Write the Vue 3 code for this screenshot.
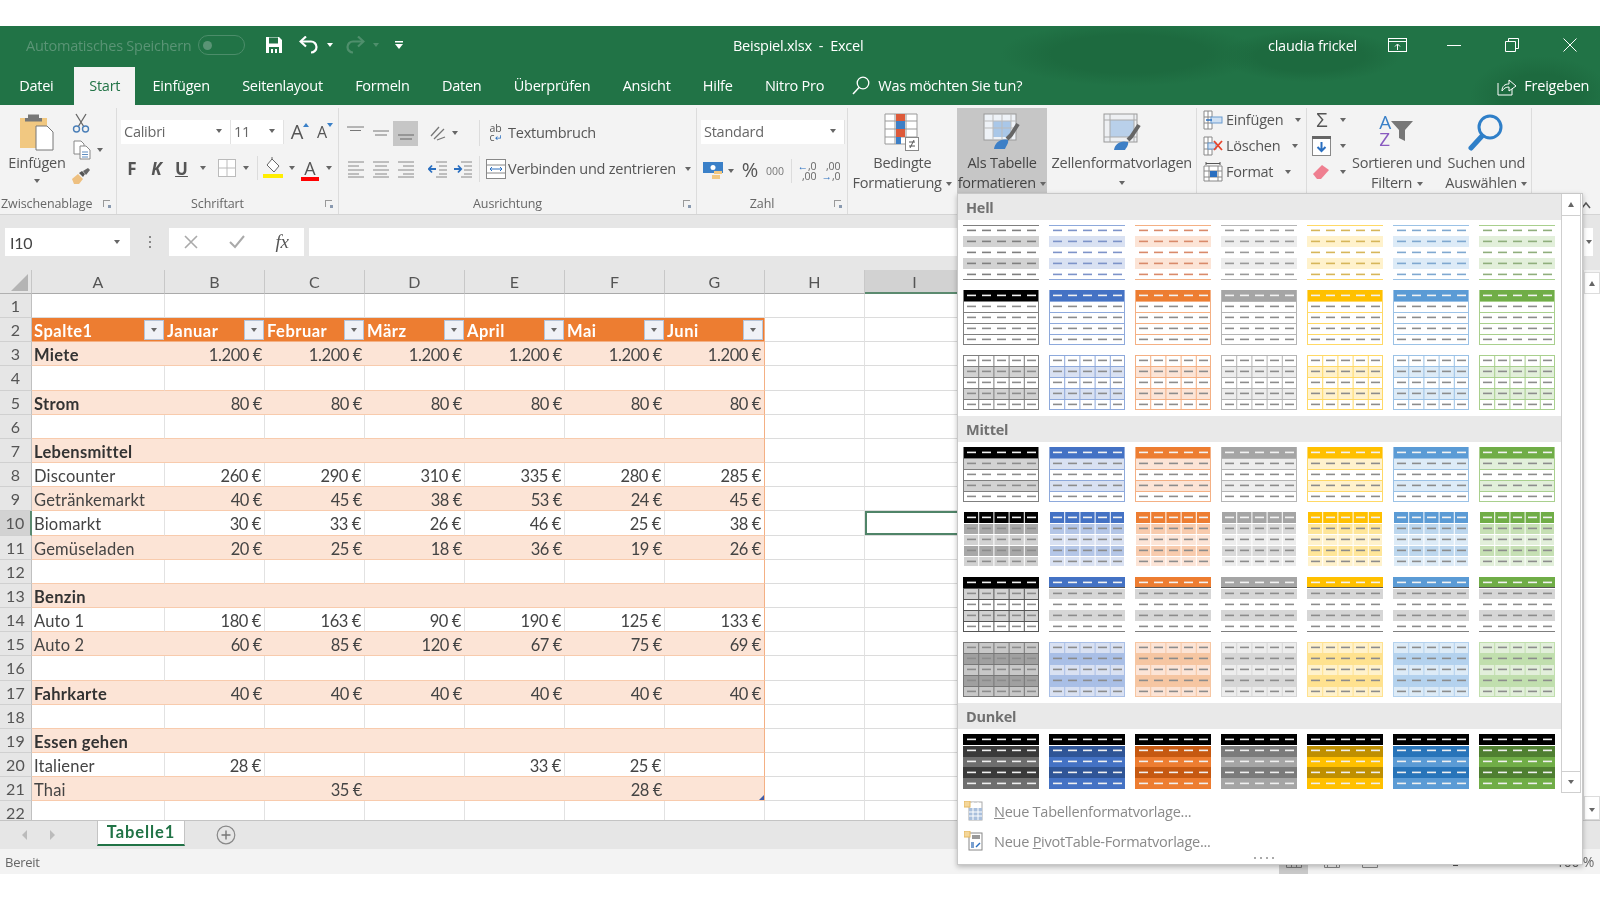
<template>
  <div class="page">
    <div class="top-white"></div>

    <div class="green">
      <div class="titlebar">
        <span class="autosave">Automatisches Speichern</span>
        <span class="toggle"><i></i></span>
        <svg class="qa-save" width="18" height="18" viewBox="0 0 18 18"><path d="M1 1h13l3 3v13H1z" fill="#fff"/><rect x="4" y="1.5" width="9" height="6" fill="#217346"/><rect x="4" y="11" width="10" height="6" fill="#217346"/><rect x="6" y="13" width="2" height="4" fill="#fff"/><rect x="10" y="13" width="2" height="4" fill="#fff"/></svg>
        <svg class="qa-undo" width="20" height="18" viewBox="0 0 20 18"><path d="M2 6.500h10a5.500 5.500 0 0 1 0 11" fill="none" stroke="#fff" stroke-width="2.200" transform="translate(0 -1)"/><path d="M7 .5 1.500 5.500 7 10.500" fill="none" stroke="#fff" stroke-width="2.200"/></svg>
        <i class="caret white qa-c1"></i>
        <svg class="qa-redo" width="20" height="18" viewBox="0 0 20 18"><path d="M18 5.500H8a5.500 5.500 0 0 0 0 11" fill="none" stroke="#4f8f6c" stroke-width="2.200"/><path d="M13 .5l5.500 5-5.500 5" fill="none" stroke="#4f8f6c" stroke-width="2.200"/></svg>
        <i class="caret dim qa-c2"></i>
        <svg class="qa-more" width="10" height="10" viewBox="0 0 10 10"><rect x="1" y="1" width="8" height="1.500" fill="#fff"/><path d="M1 4h8L5 9z" fill="#fff"/></svg>
        <span class="doc-title">Beispiel.xlsx&nbsp; - &nbsp;Excel</span>
        <span class="user">claudia frickel</span>
        <svg class="win-opt" width="20" height="15" viewBox="0 0 20 15"><rect x=".5" y=".5" width="18" height="13" fill="none" stroke="#fff"/><path d="M1 3.500h18M9.500 12V6.500M7 8.500l2.500-2.500L12 8.500" fill="none" stroke="#fff"/></svg>
        <svg class="win-min" width="14" height="14" viewBox="0 0 14 14"><path d="M0 7.500h14" stroke="#fff"/></svg>
        <svg class="win-max" width="14" height="14" viewBox="0 0 14 14"><path d="M.5 3.500h10v10H.500zM3.500 3.500v-3h10v10h-3" fill="none" stroke="#fff"/></svg>
        <svg class="win-close" width="14" height="14" viewBox="0 0 14 14"><path d="M.5.500l13 13M13.500.500l-13 13" stroke="#fff"/></svg>
      </div>
      <div class="tabs">
        <span v-for="t in tabs" :key="t" class="tab" :class="{ active: t === 'Start' }">{{ t }}</span>
        <svg class="search-ic" width="18" height="19" viewBox="0 0 18 19"><circle cx="11" cy="7" r="5.800" fill="none" stroke="#fff" stroke-width="1.300"/><path d="M7 11.500 1 18" stroke="#fff" stroke-width="1.500"/></svg>
        <span class="tell">Was möchten Sie tun?</span>
        <svg class="share-ic" width="20" height="19" viewBox="0 0 20 19"><path d="M1 6v12h14v-6" fill="none" stroke="#fff"/><path d="M5 14c0-5 3-7 7-7V3l7 6-7 5v-4c-3 0-5 1-7 4z" fill="none" stroke="#fff"/></svg>
        <span class="share">Freigeben</span>
      </div>
    </div>

    <div class="ribbon">
      <!-- Zwischenablage -->
      <section class="group g-clip">
        <div class="group-body clip-body">
          <div class="paste">
            <svg width="36" height="38" viewBox="0 0 36 38"><rect x="1" y="5" width="27" height="30" fill="#f1c881"/><rect x="9" y="1.500" width="11" height="6" fill="#777"/><rect x="6" y="5" width="17" height="3.500" fill="#777"/><path d="M17 13h11l6 6v18H17z" fill="#fff" stroke="#777"/></svg>
            <span class="paste-txt">Einfügen</span>
            <i class="caret"></i>
          </div>
          <div class="clip-tools">
            <svg width="18" height="20" viewBox="0 0 18 20"><path d="M4 1l8 13M14 1 6 14" stroke="#666" stroke-width="1.300"/><circle cx="4.500" cy="16" r="3" fill="none" stroke="#4a7fb8" stroke-width="1.400"/><circle cx="13.500" cy="16" r="3" fill="none" stroke="#4a7fb8" stroke-width="1.400"/></svg>
            <div class="copy-row">
              <svg width="18" height="20" viewBox="0 0 18 20"><path d="M1 1h7l3 3v10H1z" fill="#fff" stroke="#888"/><path d="M7 6h6l4 4v9H7z" fill="#fff" stroke="#888"/><path d="M9 12h6M9 14.500h6M9 17h6" stroke="#5f8dc0"/></svg>
              <i class="caret"></i>
            </div>
            <svg width="20" height="18" viewBox="0 0 20 18"><path d="M1 12l6-5 5 5-4 5H3z" fill="#eec080"/><path d="M8 6l3-2 3 3-2 3z" fill="#555"/><path d="M12 4l5-3 2 2-4 5z" fill="#666"/></svg>
          </div>
        </div>
        <div class="group-label label-clip">Zwischenablage<i class="launch"></i></div>
      </section>

      <!-- Schriftart -->
      <section class="group g-font">
        <div class="group-body">
          <div class="rb-row font-r1">
            <div class="combo"><span>Calibri</span><i class="caret"></i></div>
            <div class="combo"><span>11</span><i class="caret"></i></div>
            <span class="big-a">A<i class="tick up"></i></span>
            <span class="big-a small">A<i class="tick down"></i></span>
          </div>
          <div class="rb-row font-r2">
            <b class="fmt">F</b>
            <b class="fmt it">K</b>
            <b class="fmt ul">U</b>
            <i class="caret"></i>
            <span></span>
            <svg width="18" height="18" viewBox="0 0 18 18"><rect x=".5" y=".5" width="17" height="17" fill="#fff" stroke="#bbb"/><path d="M9 1v16M1 9h16" stroke="#bbb"/></svg>
            <i class="caret"></i>
            <i class="vsep"></i>
            <svg width="20" height="22" viewBox="0 0 20 22"><path d="M9 2l7 7-5 6-7-7z" fill="#fff" stroke="#666"/><path d="M9 2V0" stroke="#666"/><rect x="0" y="17" width="20" height="4" fill="#ffee00"/></svg>
            <i class="caret"></i>
            <span class="color-a">A<i></i></span>
            <i class="caret"></i>
          </div>
        </div>
        <div class="group-label">Schriftart<i class="launch"></i></div>
      </section>

      <!-- Ausrichtung -->
      <section class="group g-align">
        <div class="group-body">
          <div class="rb-row align-r1">
            <svg width="18" height="14" viewBox="0 0 18 14"><path d="M0 1h17M3 4.500h11" stroke="#777"/></svg>
            <svg width="18" height="14" viewBox="0 0 18 14"><path d="M1 5h16M3 9h12" stroke="#777"/></svg>
            <span class="sel-cell"><svg width="18" height="14" viewBox="0 0 18 14"><path d="M1 9h16M3 13h12" stroke="#666"/></svg></span>
            <span></span>
            <svg width="18" height="18" viewBox="0 0 18 18"><path d="M2 12 10 3M5 15 15 5M8 16l8-3" stroke="#777" stroke-width="1.300"/></svg>
            <i class="caret"></i>
            <span></span>
            <i class="vsep tall"></i>
            <span></span>
            <span class="wrap-ic">ab<br>c<em>↵</em></span>
            <span class="rb-text wrap-txt">Textumbruch</span>
          </div>
          <div class="rb-row align-r2">
            <svg width="18" height="18" viewBox="0 0 18 18"><path d="M1 2h16M1 6h11M1 10h16M1 14h11M1 17h16" stroke="#888"/></svg>
            <svg width="18" height="18" viewBox="0 0 18 18"><path d="M1 2h16M3 6h12M1 10h16M3 14h12M1 17h16" stroke="#888"/></svg>
            <svg width="18" height="18" viewBox="0 0 18 18"><path d="M1 2h16M6 6h11M1 10h16M6 14h11M1 17h16" stroke="#888"/></svg>
            <span></span>
            <svg width="20" height="18" viewBox="0 0 20 18"><path d="M8 2h11M11 6h8M11 10h8M11 14h8M8 17h11" stroke="#888"/><path d="M1 9h7M4 5.500 .8 9 4 12.500" fill="none" stroke="#2a6fc0" stroke-width="1.800"/></svg>
            <svg width="20" height="18" viewBox="0 0 20 18"><path d="M8 2h11M11 6h8M11 10h8M11 14h8M8 17h11" stroke="#888"/><path d="M1 9h7M5 5.500 8.200 9 5 12.500" fill="none" stroke="#2a6fc0" stroke-width="1.800"/></svg>
            <span></span>
            <i class="vsep tall"></i>
            <span></span>
            <svg width="20" height="20" viewBox="0 0 20 20"><rect x=".5" y=".5" width="19" height="19" fill="#fff" stroke="#888"/><path d="M1 6h18M1 14h18" stroke="#888"/><path d="M4 10h12M6 8l-2 2 2 2M14 8l2 2-2 2" fill="none" stroke="#2a6fc0"/></svg>
            <span class="merge"><span class="rb-text">Verbinden und zentrieren</span><i class="caret"></i></span>
          </div>
        </div>
        <div class="group-label">Ausrichtung<i class="launch"></i></div>
      </section>

      <!-- Zahl -->
      <section class="group g-num">
        <div class="group-body">
          <div class="rb-row num-r1">
            <div class="combo"><span>Standard</span><i class="caret"></i></div>
          </div>
          <div class="rb-row num-r2">
            <svg width="21" height="20" viewBox="0 0 21 20"><rect x="0" y="1" width="20" height="11" fill="#3a80c8"/><circle cx="10" cy="6.500" r="2.500" fill="#fff"/><rect x="11" y="10" width="8" height="3" fill="#f1c881"/><rect x="9" y="14" width="8" height="4" fill="#f1c881"/></svg>
            <i class="caret"></i>
            <span class="pct">%</span>
            <span class="thous">000</span>
            <i class="vsep"></i>
            <span class="dec"><span><em>←</em>,0</span><span>,00</span></span>
            <span class="dec"><span>,00</span><span><em>→</em>,0</span></span>
          </div>
        </div>
        <div class="group-label">Zahl<i class="launch"></i></div>
      </section>

      <!-- Formatvorlagen -->
      <section class="group g-styles">
        <div class="big-btn btn-cond">
          <svg width="36" height="38" viewBox="0 0 36 38"><path d="M1 1h32v30H1zM1 8h32M1 16h32M1 24h32M11 1v30M22 1v30" fill="#fff" stroke="#999"/><rect x="12" y="1" width="9" height="7" fill="#dd5a3a"/><rect x="12" y="8" width="9" height="8" fill="#3d7fc6"/><rect x="12" y="16" width="9" height="8" fill="#dd5a3a"/><rect x="12" y="24" width="5" height="7" fill="#3d7fc6"/><rect x="21.500" y="24.500" width="13" height="13" fill="#fff" stroke="#888"/><path d="M25 29h6M25 33h6M30 27l-4 8" stroke="#555"/></svg>
          <span>Bedingte</span>
          <span>Formatierung <i class="caret inl"></i></span>
        </div>
        <div class="big-btn btn-table">
          <svg width="38" height="38" viewBox="0 0 38 38"><rect x="1" y="1" width="32" height="26" fill="#eef2f7" stroke="#999"/><rect x="10" y="8" width="18" height="16" fill="#a9c7e8"/><path d="M1 8h32M1 15h32M10 1v26M19 1v26M28 1v26" stroke="#bbb"/><path d="M35 11 28 22l-4 4" stroke="#666" stroke-width="4" fill="none"/><path d="M11 36c1-6 6-11 14-9 1 3-2 6-3 9z" fill="#3d7fc6"/></svg>
          <span>Als Tabelle</span>
          <span>formatieren <i class="caret inl"></i></span>
        </div>
        <div class="big-btn btn-cell">
          <svg width="38" height="38" viewBox="0 0 38 38"><rect x="1" y="1" width="33" height="28" fill="#eef0f3" stroke="#999"/><rect x="7" y="7" width="24" height="17" fill="#b9d0ea"/><path d="M1 7h33M1 24h33M7 1v28M31 1v28" stroke="#aaa"/><path d="M36 12l-8 12-3 3" stroke="#666" stroke-width="4" fill="none"/><path d="M11 37c1-6 6-10 14-8 1 3-2 6-3 8z" fill="#3d7fc6"/></svg>
          <span>Zellenformatvorlagen</span>
          <span class="caret-line"><i class="caret"></i></span>
        </div>
      </section>

      <!-- Zellen -->
      <section class="group g-cells">
        <div class="cell-list">
          <div class="cell-item">
            <svg width="20" height="20" viewBox="0 0 20 20"><path d="M1 1h8v18H1zM1 7h8M1 13h8M5 1v18" fill="#fff" stroke="#888"/><rect x="8" y="7" width="11" height="6" fill="#cfe0f2" stroke="#6a9bd0"/><path d="M3 10h6" stroke="#2a6fc0" stroke-width="1.500"/></svg>
            <span class="rb-text">Einfügen</span><i class="caret"></i>
          </div>
          <div class="cell-item">
            <svg width="20" height="20" viewBox="0 0 20 20"><path d="M1 1h8v18H1zM1 7h8M1 13h8M5 1v18" fill="#fff" stroke="#888"/><rect x="5" y="7" width="8" height="6" fill="#cfe0f2" stroke="#6a9bd0"/><path d="M11 5l8 9M19 5l-8 9" stroke="#e8452c" stroke-width="1.800"/></svg>
            <span class="rb-text">Löschen</span><i class="caret"></i>
          </div>
          <div class="cell-item">
            <svg width="20" height="20" viewBox="0 0 20 20"><path d="M1 4h18v15H1zM1 9h18M1 15h18M6 4v15M15 4v15" fill="#fff" stroke="#888"/><rect x="7" y="9" width="7" height="6" fill="#2a6fc0"/><path d="M3 1.500h14M3 0v3M17 0v3" stroke="#555"/></svg>
            <span class="rb-text">Format</span><i class="caret"></i>
          </div>
        </div>
      </section>

      <!-- Bearbeiten -->
      <section class="group g-edit">
        <div class="edit-tools">
          <div class="edit-row"><span class="sigma">Σ</span><i class="caret"></i></div>
          <div class="edit-row">
            <svg width="20" height="20" viewBox="0 0 20 20"><rect x=".5" y=".5" width="18" height="19" fill="#fff" stroke="#888"/><rect x="0" y="0" width="19" height="3" fill="#666"/><path d="M9.500 6v9M5.500 11l4 4 4-4" fill="none" stroke="#2a6fc0" stroke-width="2"/></svg>
            <i class="caret"></i>
          </div>
          <div class="edit-row">
            <svg width="20" height="18" viewBox="0 0 20 18"><path d="M1 11 10 2l7 5-8 9H5z" fill="#ef7f90"/></svg>
            <i class="caret"></i>
          </div>
        </div>
        <div class="big-btn btn-sort">
          <div class="sort-ic"><span class="az"><b>A</b><b class="z">Z</b></span>
            <svg width="24" height="22" viewBox="0 0 24 22"><path d="M1 1h22l-8 9v11l-6-3v-8z" fill="#777"/></svg></div>
          <span>Sortieren und</span>
          <span>Filtern <i class="caret inl"></i></span>
        </div>
        <div class="big-btn btn-find">
          <svg width="38" height="38" viewBox="0 0 38 38"><circle cx="23" cy="14" r="11" fill="none" stroke="#2f7fc8" stroke-width="3"/><path d="M15 23 4 35" stroke="#2f7fc8" stroke-width="5" stroke-linecap="round"/></svg>
          <span>Suchen und</span>
          <span>Auswählen <i class="caret inl"></i></span>
        </div>
      </section>
      <svg class="collapse" width="10" height="8" viewBox="0 0 10 8"><path d="M1 7l4-5 4 5" fill="none" stroke="#555" stroke-width="1.500"/></svg>
    </div>

    <div class="formula">
      <div class="namebox"><span>I10</span><i class="caret"></i></div>
      <div class="fdots"><i></i><i></i><i></i></div>
      <div class="fbtns">
        <svg width="14" height="14" viewBox="0 0 14 14"><path d="M1 1l12 12M13 1 1 13" stroke="#aaa" stroke-width="1.600"/></svg>
        <svg width="16" height="14" viewBox="0 0 16 14"><path d="M1 7l5 5 9-11" fill="none" stroke="#aaa" stroke-width="2"/></svg>
        <span class="fx">fx</span>
      </div>
      <div class="finput"></div>
      <div class="fexpand"><i class="caret"></i></div>
    </div>

    <div class="sheet">
      <div class="grid">
        <div class="row head-row">
          <div class="corner"><i></i></div>
          <div v-for="c in columns" :key="c.name" class="col-head" :class="[c.cls, { cur: c.name === 'I' }]">{{ c.name }}</div>
        </div>
        <div v-for="r in rows" :key="r.n" class="row">
          <div class="row-head" :class="{ cur: r.n === 10 }">{{ r.n }}</div>
          <div
            v-for="(c, i) in columns"
            :key="c.name"
            class="cell"
            :class="cellClass(r, c, i)"
          >
            <span class="cell-txt">{{ r.cells[i] }}</span>
            <span v-if="r.n === 2 && i < 7" class="filter"><i class="caret"></i></span>
            <i v-if="r.n === 21 && i === 6" class="handle"></i>
          </div>
        </div>
      </div>
      <div class="vscroll">
        <div class="sb-btn"><i class="caret up"></i></div>
        <div class="sb-track"></div>
        <div class="sb-btn last-btn"><i class="caret"></i></div>
      </div>
    </div>

    <div class="sheetbar">
      <i class="nav left"></i>
      <i class="nav right"></i>
      <span class="sheet-tab">Tabelle1</span>
      <svg class="add-sheet" width="20" height="20" viewBox="0 0 20 20"><circle cx="10" cy="10" r="8.800" fill="none" stroke="#888" stroke-width="1.200"/><path d="M10 5.500v9M5.500 10h9" stroke="#777" stroke-width="1.400"/></svg>
    </div>

    <div class="status">
      <span>Bereit</span>
      <div class="status-right">
        <span class="view on"><svg width="16" height="12" viewBox="0 0 16 12"><path d="M.5.500h15v11H.500zM5.500.500v11M10.500.500v11" fill="none" stroke="#777"/></svg></span>
        <span class="view"><svg width="16" height="12" viewBox="0 0 16 12"><path d="M.5.500h15v11H.500zM3.500 3.500h9v8h-9z" fill="none" stroke="#888"/></svg></span>
        <span class="view"><svg width="16" height="12" viewBox="0 0 16 12"><path d="M.5.500h15v11H.500z" fill="none" stroke="#888"/></svg></span>
        <i class="zoom-thumb"></i>
        <span class="zoom-val">100 %</span>
      </div>
    </div>
    <div class="bottom-white"></div>

    <!-- Als Tabelle formatieren -->
    <div class="gallery">
      <div class="gallery-main">
        <div class="gallery-list">
          <template v-for="s in sections" :key="s.title">
            <div class="sec-head">{{ s.title }}</div>
            <div class="thumbs">
              <svg
                v-for="(t, i) in s.thumbs"
                :key="i"
                width="76"
                height="55"
                viewBox="0 0 76 55"
              >
                <rect
                  v-for="(p, j) in t"
                  :key="j"
                  :x="p[0]"
                  :y="p[1]"
                  :width="p[2]"
                  :height="p[3]"
                  :fill="p[4]"
                />
              </svg>
            </div>
          </template>
        </div>
        <div class="gal-scroll">
          <div class="gal-btn"><i class="caret up"></i></div>
          <div class="gal-track"></div>
          <div class="gal-btn down"><i class="caret"></i></div>
        </div>
      </div>
      <div class="gal-foot">
        <div class="gal-item">
          <svg width="20" height="20" viewBox="0 0 20 20"><rect x="5" y="1" width="13" height="18" fill="#fff" stroke="#aaa"/><rect x="5" y="7" width="13" height="12" fill="#a9bfdc"/><path d="M5 11h13M5 15h13M9 1v18M14 1v18" stroke="#fff"/><rect x="0" y="0" width="6" height="6" fill="#f5d79a" stroke="#e4b860"/></svg>
          <span><u>N</u>eue Tabellenformatvorlage...</span>
        </div>
        <div class="gal-item">
          <svg width="20" height="20" viewBox="0 0 20 20"><rect x="5" y="2" width="13" height="17" fill="#fff" stroke="#888"/><rect x="8" y="4" width="8" height="4" fill="#999"/><path d="M7 11h3v6H7z" fill="#7aa0d0"/><path d="M12 16l4-4" stroke="#2a6fc0" stroke-width="1.500"/><rect x="0" y="0" width="6" height="6" fill="#f5d79a" stroke="#e4b860"/></svg>
          <span>Neue <u>P</u>ivotTable-Formatvorlage...</span>
        </div>
        <div class="grip"><i></i><i></i><i></i><i></i></div>
      </div>
    </div>
  </div>
</template>

<script setup>
const tabs = ['Datei', 'Start', 'Einfügen', 'Seitenlayout', 'Formeln', 'Daten', 'Überprüfen', 'Ansicht', 'Hilfe', 'Nitro Pro']

const columns = [
  { name: 'A', cls: 'w-a' },
  { name: 'B', cls: 'w' },
  { name: 'C', cls: 'w' },
  { name: 'D', cls: 'w' },
  { name: 'E', cls: 'w' },
  { name: 'F', cls: 'w' },
  { name: 'G', cls: 'w' },
  { name: 'H', cls: 'w' },
  { name: 'I', cls: 'w' },
  { name: 'J', cls: 'w-rest' }
]

const data = {
  2: ['Spalte1', 'Januar', 'Februar', 'März', 'April', 'Mai', 'Juni'],
  3: ['Miete', '1.200 €', '1.200 €', '1.200 €', '1.200 €', '1.200 €', '1.200 €'],
  5: ['Strom', '80 €', '80 €', '80 €', '80 €', '80 €', '80 €'],
  7: ['Lebensmittel'],
  8: ['Discounter', '260 €', '290 €', '310 €', '335 €', '280 €', '285 €'],
  9: ['Getränkemarkt', '40 €', '45 €', '38 €', '53 €', '24 €', '45 €'],
  10: ['Biomarkt', '30 €', '33 €', '26 €', '46 €', '25 €', '38 €'],
  11: ['Gemüseladen', '20 €', '25 €', '18 €', '36 €', '19 €', '26 €'],
  13: ['Benzin'],
  14: ['Auto 1', '180 €', '163 €', '90 €', '190 €', '125 €', '133 €'],
  15: ['Auto 2', '60 €', '85 €', '120 €', '67 €', '75 €', '69 €'],
  17: ['Fahrkarte', '40 €', '40 €', '40 €', '40 €', '40 €', '40 €'],
  19: ['Essen gehen'],
  20: ['Italiener', '28 €', '', '', '33 €', '25 €', ''],
  21: ['Thai', '', '35 €', '', '', '28 €', '']
}
const boldRows = [3, 5, 7, 13, 17, 19]

const rows = []
for (let n = 1; n <= 22; n++) {
  rows.push({ n, cells: data[n] || [] })
}

const cellClass = (r, c, i) => {
  const inTable = r.n >= 2 && r.n <= 21 && i < 7
  return [
    c.cls,
    {
      'th': r.n === 2 && i < 7,
      'tint': inTable && r.n > 2 && r.n % 2 === 1,
      'plain': inTable && r.n > 2 && r.n % 2 === 0,
      'last': inTable && i === 6,
      'bold': boldRows.includes(r.n) && i === 0,
      'num': i > 0 && r.n > 2,
      'active-cell': r.n === 10 && c.name === 'I'
    }
  ]
}

// gallery colours per theme column
const themes = [
  { a: '#000000', line: '#7f7f7f', t1: '#d2d2d2', t2: '#a8a8a8', dash: '#7f7f7f', dk: '#3a3a3a', md: '#6e6e6e', m4a: '#c8c8c8', m4b: '#a0a0a0', m4l: '#777777' },
  { a: '#4472c4', line: '#8ea9db', t1: '#d9e1f2', t2: '#b4c6e7', dash: '#7d93c9', dk: '#2f5597', md: '#4472c4', m4a: '#d9e1f2', m4b: '#a9bfe6', m4l: '#a9bfe6' },
  { a: '#ed7d31', line: '#f4b084', t1: '#fce4d6', t2: '#f8cbad', dash: '#d98a6a', dk: '#c65911', md: '#ed7d31', m4a: '#fce4d6', m4b: '#f6c6a2', m4l: '#f6c6a2' },
  { a: '#a5a5a5', line: '#b5b5b5', t1: '#ededed', t2: '#d9d9d9', dash: '#9a9a9a', dk: '#7b7b7b', md: '#a5a5a5', m4a: '#ededed', m4b: '#d6d6d6', m4l: '#d6d6d6' },
  { a: '#ffc000', line: '#ffd966', t1: '#fff2cc', t2: '#ffe699', dash: '#d6b65a', dk: '#bf8f00', md: '#ffc000', m4a: '#fff2cc', m4b: '#ffe28f', m4l: '#ffe28f' },
  { a: '#5b9bd5', line: '#9bc2e6', t1: '#ddebf7', t2: '#bdd7ee', dash: '#7fa8d0', dk: '#2874b9', md: '#5b9bd5', m4a: '#ddebf7', m4b: '#b4d2ee', m4l: '#b4d2ee' },
  { a: '#70ad47', line: '#a9d08e', t1: '#e2efda', t2: '#c6e0b4', dash: '#8fae7c', dk: '#4f7f31', md: '#70ad47', m4a: '#e2efda', m4b: '#c1dfae', m4l: '#c1dfae' }
]

const dashes = (band, color) => {
  const out = []
  for (let k = 0; k < 5; k++) out.push([4 + k * 15, band * 11 + 4.6, 9, 1.6, color])
  return out
}
const hLines = (color, from = 0) => {
  const out = []
  for (let b = from; b <= 5; b++) out.push([0, Math.min(b * 11, 54), 76, 1, color])
  return out
}
const vLines = (color) => {
  const out = []
  for (let k = 0; k <= 5; k++) out.push([Math.min(k * 15.2, 75), 0, 1, 55, color])
  return out
}

const gray = '#8c8c8c'
const thumbKinds = {
  light1(t) {
    const p = [[0, 0, 76, 1, t.line], [0, 11, 76, 11, t.t1], [0, 33, 76, 11, t.t1], [0, 54, 76, 1, t.line]]
    for (let b = 0; b < 5; b++) p.push(...dashes(b, t.dash))
    return p
  },
  light2(t) {
    const p = [[0, 0, 76, 11, t.a], ...hLines(t.line, 1), [0, 0, 1, 55, t.line], [75, 0, 1, 55, t.line]]
    p.push(...dashes(0, '#f2f2f2'))
    for (let b = 1; b < 5; b++) p.push(...dashes(b, gray))
    return p
  },
  light3(t) {
    const p = [[0, 11, 76, 11, t.t1], [0, 33, 76, 11, t.t1], ...hLines(t.line), ...vLines(t.line)]
    for (let b = 0; b < 5; b++) p.push(...dashes(b, gray))
    return p
  },
  med1(t) {
    const p = [[0, 11, 76, 11, t.t1], [0, 33, 76, 11, t.t1], [0, 0, 76, 11, t.a], ...hLines(t.line, 1), [0, 0, 1, 55, t.line], [75, 0, 1, 55, t.line]]
    p.push(...dashes(0, '#f2f2f2'))
    for (let b = 1; b < 5; b++) p.push(...dashes(b, gray))
    return p
  },
  med2(t) {
    const p = [[0, 0, 76, 11, t.a], [0, 11, 76, 11, t.t2], [0, 22, 76, 11, t.t1], [0, 33, 76, 11, t.t2], [0, 44, 76, 11, t.t1], ...hLines('#ffffff', 1), ...vLines('#ffffff')]
    p.push(...dashes(0, '#f2f2f2'))
    for (let b = 1; b < 5; b++) p.push(...dashes(b, gray))
    return p
  },
  med3(t, i) {
    if (i === 0) {
      const p = [[0, 11, 76, 11, '#d2d2d2'], [0, 33, 76, 11, '#d2d2d2'], ...hLines('#555555', 1), ...vLines('#555555'), [0, 0, 76, 11, '#000000']]
      p.push(...dashes(0, '#f2f2f2'))
      for (let b = 1; b < 5; b++) p.push(...dashes(b, gray))
      return p
    }
    const p = [[0, 0, 76, 11, t.a], [0, 10, 76, 1, '#555555'], [0, 12, 76, 10, '#d6d6d6'], [0, 33, 76, 11, '#d6d6d6'], [0, 54, 76, 1, '#7f7f7f']]
    p.push(...dashes(0, '#f2f2f2'))
    for (let b = 1; b < 5; b++) p.push(...dashes(b, gray))
    return p
  },
  med4(t) {
    const p = [[0, 0, 76, 11, t.m4a], [0, 11, 76, 11, t.m4b], [0, 22, 76, 11, t.m4a], [0, 33, 76, 11, t.m4b], [0, 44, 76, 11, t.m4a], ...hLines(t.m4l), ...vLines(t.m4l)]
    for (let b = 0; b < 5; b++) p.push(...dashes(b, gray))
    return p
  },
  dark(t) {
    const p = [[0, 0, 76, 11, '#000000'], [0, 12, 76, 11, t.dk], [0, 23, 76, 10, t.md], [0, 33, 76, 11, t.dk], [0, 44, 76, 11, t.md]]
    for (let b = 0; b < 5; b++) p.push(...dashes(b, '#f0f0f0'))
    return p
  }
}
const makeThumbs = (kinds) => {
  const out = []
  kinds.forEach((k) => themes.forEach((t, i) => out.push(thumbKinds[k](t, i))))
  return out
}

const sections = [
  { title: 'Hell', thumbs: makeThumbs(['light1', 'light2', 'light3']) },
  { title: 'Mittel', thumbs: makeThumbs(['med1', 'med2', 'med3', 'med4']) },
  { title: 'Dunkel', thumbs: makeThumbs(['dark']) }
]
</script>

<style>
html, body { margin: 0; background: #fff; }
</style>

<style scoped>
.page {
  position: relative;
  width: 1600px;
  height: 900px;
  overflow: hidden;
  display: flex;
  flex-direction: column;
  font-family: "Open Sans", "Liberation Sans", sans-serif;
  font-size: 14.5px;
  letter-spacing: -0.25px;
  color: #555;
  background: #fff;
  filter: blur(0.4px);
}
.top-white { height: 26px; flex: none; }
.bottom-white { flex: 1; }

/* shared bits */
.caret {
  display: inline-block;
  flex: none;
  width: 0;
  height: 0;
  border-left: 3.5px solid transparent;
  border-right: 3.5px solid transparent;
  border-top: 4px solid #666;
}
.caret.up { border-top: 0; border-bottom: 5px solid #666; }
.caret.white { border-top-color: #fff; }
.caret.dim { border-top-color: #4f8f6c; }
.caret.inl { vertical-align: middle; margin-left: 1px; }
.vsep { display: block; width: 1px; height: 24px; background: #dcdcdc; justify-self: center; }
.vsep.tall { height: 26px; }

/* green header */
.green {
  flex: none;
  height: 79px;
  color: #fff;
  background-color: #217346;
  background-image:
    radial-gradient(ellipse 130px 32px at 1130px 28px, #1d6a3f 60%, transparent 100%),
    radial-gradient(ellipse 90px 26px at 1310px 30px, #1d6a3f 60%, transparent 100%),
    radial-gradient(ellipse 70px 40px at 1540px 70px, #1d6a3f 55%, transparent 100%);
}
.titlebar { height: 42px; box-sizing: border-box; padding: 0 0 4px 26px; display: flex; align-items: center; }
.autosave { width: 172px; color: #5a9475; white-space: nowrap; }
.toggle {
  width: 47px;
  height: 20px;
  box-sizing: border-box;
  border: 1.500px solid #4c8d6a;
  border-radius: 10px;
  display: flex;
  align-items: center;
  padding-left: 4px;
}
.toggle i { width: 9px; height: 9px; border-radius: 50%; background: #5a9475; }
.qa-save { margin-left: 20px; }
.qa-undo { margin-left: 16px; }
.qa-c1 { margin-left: 8px; }
.qa-redo { margin-left: 12px; }
.qa-c2 { margin-left: 8px; }
.qa-more { margin-left: 15px; }
.doc-title { margin-left: 329px; width: 135px; white-space: nowrap; }
.user { margin-left: 400px; width: 92px; white-space: nowrap; }
.win-opt { margin-left: 28px; }
.win-min { margin-left: 39px; }
.win-max { margin-left: 44px; }
.win-close { margin-left: 44px; }

.tabs { height: 37px; display: flex; align-items: stretch; padding-left: 3px; font-size: 14.5px; }
.tab { padding: 0 16.150px; line-height: 35px; white-space: nowrap; }
.tab:first-child { padding-right: 19.650px; }
.tab.active { background: #f3f3f3; color: #217346; padding: 0 15.150px; margin: -1px 1px 0 1px; line-height: 37px; }
.search-ic { margin: 8px 0 0 12px; }
.tell { margin-left: 8px; width: 150px; line-height: 35px; white-space: nowrap; }
.share-ic { margin: 9px 0 0 469px; }
.share { margin-left: 7px; line-height: 35px; white-space: nowrap; }

/* ribbon */
.ribbon {
  flex: none;
  position: relative;
  height: 110px;
  background: #f3f3f3;
  display: flex;
  padding-top: 3px;
  box-sizing: border-box;
  border-bottom: 1px solid #d4d4d4;
}
.group {
  flex: none;
  box-sizing: border-box;
  height: 106px;
  border-right: 1px solid #dcdcdc;
  display: flex;
  flex-direction: column;
}
.group-body { flex: 1; min-height: 0; padding-top: 12px; }
.group-label {
  position: relative;
  flex: none;
  height: 18px;
  line-height: 16px;
  padding-right: 20px;
  font-size: 12.500px;
  letter-spacing: -0.100px;
  text-align: center;
  white-space: nowrap;
  color: #666;
}
.launch {
  position: absolute;
  top: 4px;
  right: 6px;
  width: 6px;
  height: 6px;
  border-left: 1px solid #999;
  border-top: 1px solid #999;
}
.launch::after {
  content: "";
  position: absolute;
  right: -1px;
  bottom: -1px;
  width: 3px;
  height: 3px;
  background: #8a9ab0;
}
.rb-row { display: grid; height: 24px; align-items: center; justify-items: center; }
.rb-row + .rb-row { margin-top: 12px; }
.rb-text { white-space: nowrap; color: #555; margin-bottom: 2px; }

.g-clip { width: 117px; }
.clip-body { display: flex; padding-top: 5px; }
.paste { width: 74px; display: flex; flex-direction: column; align-items: center; }
.paste-txt { line-height: 20px; margin-top: 2px; }
.paste .caret { margin-top: 6px; }
.clip-tools { width: 30px; display: flex; flex-direction: column; align-items: center; gap: 7px; padding-top: 0; margin-left: -8px; }
.copy-row { display: flex; align-items: center; gap: 6px; margin-left: 14px; }
.label-clip { text-align: left; padding-left: 1px; padding-right: 0; }

.g-font { width: 222px; }
.font-r1 { grid-template-columns: 110px 53px 26px 24px; padding-left: 4px; }
.font-r2 { grid-template-columns: 24px 25px 25px 17px 2px 28px 10px 12px 20px 18px 18px 20px; padding-left: 3px; }
.combo {
  justify-self: stretch;
  height: 24px;
  box-sizing: border-box;
  background: #fff;
  border-right: 1px solid #e2e2e2;
  display: flex;
  align-items: center;
  justify-content: space-between;
  padding: 0 8px 2px 3px;
  color: #666;
}
.big-a { position: relative; font-size: 20px; color: #555; line-height: 24px; letter-spacing: 0; }
.big-a.small { font-size: 16px; }
.tick { position: absolute; top: 3px; right: -6px; width: 0; height: 0; border-left: 3px solid transparent; border-right: 3px solid transparent; }
.tick.up { border-bottom: 4px solid #3a80c8; }
.tick.down { border-top: 4px solid #3a80c8; }
.fmt { font-size: 17px; color: #555; letter-spacing: 0; }
.fmt.it { font-style: italic; }
.fmt.ul { text-decoration: underline; }
.color-a { position: relative; font-size: 18px; color: #555; line-height: 20px; letter-spacing: 0; }
.color-a i { position: absolute; left: -3px; right: -3px; bottom: -3px; height: 4px; background: #f00; }

.g-align { width: 358px; }
.align-r1, .align-r2 { padding-left: 4px; }
.align-r1 { grid-template-columns: 25px 25px 25px 7px 25px 10px 19px 1px 6px 20px auto; justify-content: start; }
.align-r2 { grid-template-columns: 25px 25px 25px 7px 25px 25px 4px 1px 6px 20px auto; justify-content: start; }
.sel-cell { width: 25px; height: 25px; background: #c6c6c6; display: flex; align-items: center; justify-content: center; }
.wrap-ic { font-size: 10.500px; line-height: 9px; color: #555; letter-spacing: 0; }
.wrap-ic em { color: #2a6fc0; font-style: normal; font-size: 9px; }
.wrap-txt { justify-self: start; margin-left: 2px; }
.merge { justify-self: start; margin-left: 2px; display: flex; align-items: center; gap: 9px; }

.g-num { width: 151px; }
.num-r1 { grid-template-columns: 144px; padding-left: 4px; }
.num-r2 { grid-template-columns: 24px 12px 26px 24px 8px 24px 24px; padding-left: 4px; }
.pct { font-size: 20px; color: #555; letter-spacing: 0; margin-bottom: 3px; }
.thous { font-size: 10.500px; color: #777; letter-spacing: 0; }
.dec { display: flex; flex-direction: column; font-size: 10.500px; line-height: 10px; color: #666; letter-spacing: 0; text-align: right; }
.dec em { font-style: normal; color: #2a6fc0; }

.g-styles { width: 349px; flex-direction: row; }
.big-btn {
  box-sizing: border-box;
  height: 85px;
  padding-top: 5px;
  display: flex;
  flex-direction: column;
  align-items: center;
  line-height: 20px;
  white-space: nowrap;
}
.big-btn svg, .sort-ic { height: 38px; margin-bottom: 2px; flex: none; }
.btn-cond { width: 109px; }
.btn-table { width: 91px; background: #c6c6c6; color: #444; }
.btn-cell { width: 149px; }
.caret-line { display: block; line-height: 14px; }

.g-cells { width: 110px; }
.cell-list { padding: 0 0 0 6px; margin-top: -1px; }
.cell-item { height: 26px; display: flex; align-items: center; gap: 3px; }
.cell-item .caret { margin-left: 9px; }

.g-edit { width: 225px; flex-direction: row; border-right: 1px solid #dcdcdc; }
.edit-tools { width: 40px; flex: none; padding: 0 0 0 5px; box-sizing: content-box; margin-top: -1px; }
.edit-row { height: 26px; display: flex; align-items: center; gap: 8px; }
.sigma { width: 20px; font-size: 20px; color: #555; letter-spacing: 0; text-align: center; line-height: 24px; }
.btn-sort { width: 90px; }
.sort-ic { display: flex; align-items: flex-start; padding-top: 1px; box-sizing: border-box; }
.sort-ic svg { height: 22px; margin: 6px 0 0 -1px; }
.az { display: flex; flex-direction: column; font-size: 19px; line-height: 17px; color: #3a80c8; font-weight: 400; letter-spacing: 0; }
.az b { font-weight: 400; }
.az .z { color: #8a5bc0; }
.btn-find { width: 90px; }
.collapse { position: absolute; left: 1581px; top: 96px; }

/* formula bar */
.formula {
  flex: none;
  height: 55px;
  box-sizing: border-box;
  padding: 13px 7px 14px 5px;
  background: #e6e6e6;
  display: flex;
}
.namebox {
  width: 125px;
  background: #fff;
  display: flex;
  align-items: center;
  justify-content: space-between;
  padding: 0 10px 0 5px;
  box-sizing: border-box;
  font-family: Lato, sans-serif;
  font-size: 16px;
  color: #444;
}
.fdots { width: 39px; display: flex; flex-direction: column; align-items: center; justify-content: center; gap: 3px; }
.fdots i { width: 2px; height: 2px; background: #888; }
.fbtns { width: 135px; background: #fff; display: flex; align-items: center; justify-content: space-around; }
.fx { font-family: "Liberation Serif", serif; font-style: italic; font-size: 19px; color: #555; }
.finput { flex: 1; margin-left: 5px; background: #fff; }
.fexpand { width: 9px; margin-left: 6px; background: #fff; display: flex; align-items: center; justify-content: center; }

/* sheet */
.sheet { flex: none; height: 550px; display: flex; background: #fff; }
.grid { flex: 1; overflow: hidden; }
.row { display: flex; height: 24.170px; font-family: Lato, "Liberation Sans", sans-serif; font-size: 16.500px; letter-spacing: 0.2px; color: #444; }
.head-row { height: 24px; background: #e6e6e6; }
.corner { width: 32px; flex: none; position: relative; border-right: 1px solid #c6c6c6; border-bottom: 1px solid #b0b0b0; box-sizing: border-box; }
.corner i { position: absolute; right: 3px; bottom: 2px; width: 0; height: 0; border-left: 17px solid transparent; border-bottom: 17px solid #b4b4b4; }
.col-head {
  flex: none;
  box-sizing: border-box;
  text-align: center;
  line-height: 24px;
  font-size: 16px;
  color: #555;
  border-right: 1px solid #c8c8c8;
  border-bottom: 1px solid #aaa;
}
.col-head.cur { background: #d2d2d2; border-bottom: 2px solid #5b8a6f; }
.w-a { width: 133px; }
.w { width: 100px; }
.w-rest { flex: 1; }
.row-head {
  width: 32px;
  flex: none;
  box-sizing: border-box;
  text-align: center;
  line-height: 23px;
  background: #e6e6e6;
  border-right: 1px solid #c0c0c0;
  border-bottom: 1px solid #d0d0d0;
  font-size: 16px;
  color: #555;
}
.row-head.cur { background: #d2d2d2; border-right: 2px solid #5b8a6f; }
.cell {
  position: relative;
  flex: none;
  box-sizing: border-box;
  border-right: 1px solid #e2e2e2;
  border-bottom: 1px solid #dcdcdc;
  padding: 0 3px 0 2px;
  line-height: 26px;
  white-space: nowrap;
  display: flex;
}
.cell.w-rest { flex: 1; }
.cell-txt { flex: 1; }
.th { background: #ed7d31; color: #fff; font-weight: 700; letter-spacing: 0.5px; border-right: 0; border-bottom: 1px solid #f4b084; }
.tint { background: #fce4d6; border-right: 0; border-bottom: 1px solid #f8cbad; }
.plain { border-bottom: 1px solid #f8cbad; }
.last { border-right: 1px solid #f4b084; }
.bold { font-weight: 700; color: #333; letter-spacing: 0.3px; }
.num { text-align: right; letter-spacing: -0.4px; }
.active-cell { box-shadow: inset 0 0 0 2px #4f8468; }
.filter {
  position: absolute;
  top: 2px;
  right: 1px;
  width: 20px;
  height: 20px;
  box-sizing: border-box;
  background: #f0f2f7;
  border: 1px solid #b6c4d8;
  display: flex;
  align-items: center;
  justify-content: center;
}
.handle { position: absolute; right: 0; bottom: 0; width: 0; height: 0; border-left: 5px solid transparent; border-bottom: 5px solid #3f5da8; }

.vscroll { width: 17px; flex: none; display: flex; flex-direction: column; background: #f3f3f3; border-left: 1px solid #dcdcdc; box-sizing: border-box; }
.sb-btn { height: 20px; margin-top: 2px; background: #fff; display: flex; align-items: center; justify-content: center; border: 1px solid #dcdcdc; }
.last-btn { height: 24px; margin-top: 0; padding-top: 4px; box-sizing: border-box; }
.sb-track { flex: 1; background: #fff; margin: 0; }

/* sheet tabs / status */
.sheetbar {
  flex: none;
  height: 29px;
  box-sizing: border-box;
  background: #e6e6e6;
  border-top: 1px solid #c4c4c4;
  display: flex;
  align-items: flex-start;
}
.nav { width: 0; height: 0; margin-top: 9px; border-top: 5px solid transparent; border-bottom: 5px solid transparent; }
.nav.left { margin-left: 22px; border-right: 5px solid #bbb; }
.nav.right { margin-left: 23px; border-left: 5px solid #bbb; }
.sheet-tab {
  margin-left: 42px;
  width: 88px;
  height: 25px;
  box-sizing: border-box;
  background: #fff;
  border-bottom: 2px solid #217346;
  border-left: 1px solid #c4c4c4;
  border-right: 1px solid #c4c4c4;
  text-align: center;
  line-height: 23px;
  font-family: Lato, sans-serif;
  font-weight: 700;
  font-size: 16.500px;
  letter-spacing: 0.9px;
  color: #217346;
}
.add-sheet { margin: 4px 0 0 31px; }

.status {
  flex: none;
  height: 25px;
  background: #f3f3f3;
  display: flex;
  align-items: center;
  padding-left: 5px;
  font-size: 13px;
  color: #666;
}
.status-right { margin-left: auto; display: flex; align-items: center; height: 100%; }
.view { width: 29px; height: 100%; margin-right: 9px; display: flex; align-items: center; justify-content: center; }
.view.on { background: #c9c9c9; }
.zoom-thumb { width: 5px; height: 8px; background: #555; margin: 0 98px 0 60px; }
.zoom-val { padding-right: 6px; font-size: 14px; white-space: nowrap; }

/* table style gallery */
.gallery {
  position: absolute;
  left: 957px;
  top: 193px;
  width: 626px;
  height: 672px;
  box-sizing: border-box;
  background: #fff;
  border: 1px solid #c8c8c8;
  box-shadow: 0 2px 5px rgba(0, 0, 0, 0.25);
  display: flex;
  flex-direction: column;
}
.gallery-main { flex: none; height: 599px; display: flex; }
.gallery-list { width: 603px; }
.sec-head {
  height: 26px;
  background: #e9e9e9;
  padding-left: 8px;
  line-height: 27px;
  font-weight: 700;
  font-size: 14.500px;
  color: #707070;
}
.thumbs {
  display: grid;
  grid-template-columns: repeat(7, 76px);
  column-gap: 10px;
  row-gap: 10px;
  padding: 5px 0 6px 5px;
}
.thumbs svg { display: block; }
.gal-scroll { width: 20px; flex: none; display: flex; flex-direction: column; border: 1px solid #cfcfcf; border-top: 0; box-sizing: border-box; height: 599px; }
.gal-btn { height: 21px; display: flex; align-items: center; justify-content: center; border-bottom: 1px solid #cfcfcf; background: #fff; }
.gal-btn.down { height: 20px; border-top: 1px solid #cfcfcf; border-bottom: 0; }
.gal-track { flex: 1; }
.gal-foot { flex: 1; padding-top: 3px; position: relative; }
.gal-item { height: 30px; display: flex; align-items: center; gap: 10px; padding-left: 6px; color: #8a8a8a; font-size: 14.500px; white-space: nowrap; }
.grip { position: absolute; left: 296px; bottom: 5px; display: flex; gap: 4px; }
.grip i { width: 2px; height: 2px; background: #aaa; }
</style>
